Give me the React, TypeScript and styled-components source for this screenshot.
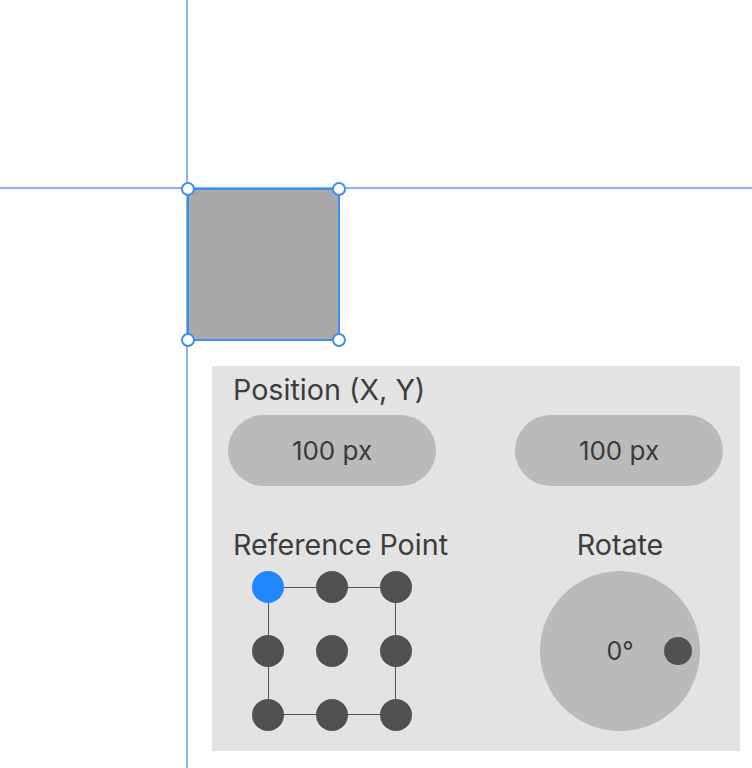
import React from "react";
import styled, { createGlobalStyle } from "styled-components";

const GlobalStyle = createGlobalStyle`
  html, body {
    margin: 0;
    padding: 0;
    background: #ffffff;
  }
  body {
    font-family: Inter, "Noto Sans", sans-serif;
    color: #3d3d3d;
  }
`;

const dots = [0, 1, 2, 3, 4, 5, 6, 7, 8];

function App() {
  // state
  const [active, setActive] = React.useState(0);
  const [x] = React.useState(100);
  const [y] = React.useState(100);
  const [angle] = React.useState(0);

  return (
    <Stage>
      <GlobalStyle />
      <GuideV />
      <GuideH />
      <Selection>
        <Handle $x="left" $y="top" />
        <Handle $x="right" $y="top" />
        <Handle $x="left" $y="bottom" />
        <Handle $x="right" $y="bottom" />
      </Selection>

      <Panel>
        <Title>Position (X, Y)</Title>
        <FieldRow>
          <Field>{x} px</Field>
          <Field>{y} px</Field>
        </FieldRow>

        <Lower>
          <RefColumn>
            <Heading>Reference Point</Heading>
            <DotGrid>
              {dots.map((i) => (
                <Dot key={i} $active={i === active} onClick={() => setActive(i)} />
              ))}
            </DotGrid>
          </RefColumn>
          <RotateColumn>
            <Heading>Rotate</Heading>
            <Dial>
              <DialValue>{angle}°</DialValue>
              <Knob />
            </Dial>
          </RotateColumn>
        </Lower>
      </Panel>
    </Stage>
  );
}

const Stage = styled.div`
  position: relative;
  width: 752px;
  height: 768px;
  overflow: hidden;
  box-sizing: border-box;
  padding: 366px 0 0 212px;
`;

const GuideV = styled.div`
  position: absolute;
  left: 186px;
  top: 0;
  width: 2px;
  height: 100%;
  background: #86b4ee;
`;

const GuideH = styled.div`
  position: absolute;
  left: 0;
  top: 187px;
  width: 100%;
  height: 2px;
  background: #86b4ee;
`;

const Selection = styled.div`
  position: absolute;
  left: 187px;
  top: 188px;
  width: 153px;
  height: 153px;
  box-sizing: border-box;
  background: #a9a9a9;
  border: 2px solid #3f8ef0;
  border-radius: 3px;
`;

const Handle = styled.span<{ $x: "left" | "right"; $y: "top" | "bottom" }>`
  position: absolute;
  ${(p) => p.$x}: -8px;
  ${(p) => p.$y}: -8px;
  width: 14px;
  height: 14px;
  border-radius: 50%;
  background: #ffffff;
  border: 2px solid #3f8ef0;
  box-sizing: border-box;
`;

const Panel = styled.div`
  width: 528px;
  height: 385px;
  box-sizing: border-box;
  background: #e3e3e3;
  padding: 7px 17px 0 16px;
  display: flex;
  flex-direction: column;
`;

const Title = styled.div`
  font-size: 28.7px;
  line-height: 34px;
  padding-left: 5px;
`;

const FieldRow = styled.div`
  display: flex;
  justify-content: space-between;
  margin-top: 8px;
`;

const Field = styled.div`
  width: 208px;
  height: 71px;
  border-radius: 36px;
  background: #bababa;
  display: flex;
  align-items: center;
  justify-content: center;
  font-size: 26px;
  color: #3a3a3a;
`;

const Lower = styled.div`
  display: flex;
  justify-content: space-between;
  margin-top: 42px;
`;

const Heading = styled.div`
  font-size: 28.7px;
  line-height: 34px;
  white-space: nowrap;
`;

const RefColumn = styled.div`
  display: flex;
  flex-direction: column;
  padding-left: 5px;
  gap: 9px;
`;

const DotGrid = styled.div`
  position: relative;
  margin-left: 19px;
  width: 160px;
  height: 160px;
  display: grid;
  grid-template-columns: repeat(3, 32px);
  grid-template-rows: repeat(3, 32px);
  gap: 32px;

  &::before {
    content: "";
    position: absolute;
    inset: 16px;
    border: 1.5px solid #555555;
  }
`;

const Dot = styled.div<{ $active: boolean }>`
  position: relative;
  width: 32px;
  height: 32px;
  border-radius: 50%;
  background: ${(p) => (p.$active ? "#1e88ff" : "#515151")};
  cursor: pointer;
`;

const RotateColumn = styled.div`
  display: flex;
  flex-direction: column;
  align-items: center;
  gap: 9px;
  margin-right: 23px;
`;

const Dial = styled.div`
  position: relative;
  width: 160px;
  height: 160px;
  border-radius: 50%;
  background: #bababa;
  display: flex;
  align-items: center;
  justify-content: center;
`;

const DialValue = styled.span`
  font-size: 25px;
  color: #3a3a3a;
`;

const Knob = styled.span`
  position: absolute;
  right: 8px;
  top: 50%;
  width: 28px;
  height: 28px;
  margin-top: -14px;
  border-radius: 50%;
  background: #515151;
`;

export default App;
